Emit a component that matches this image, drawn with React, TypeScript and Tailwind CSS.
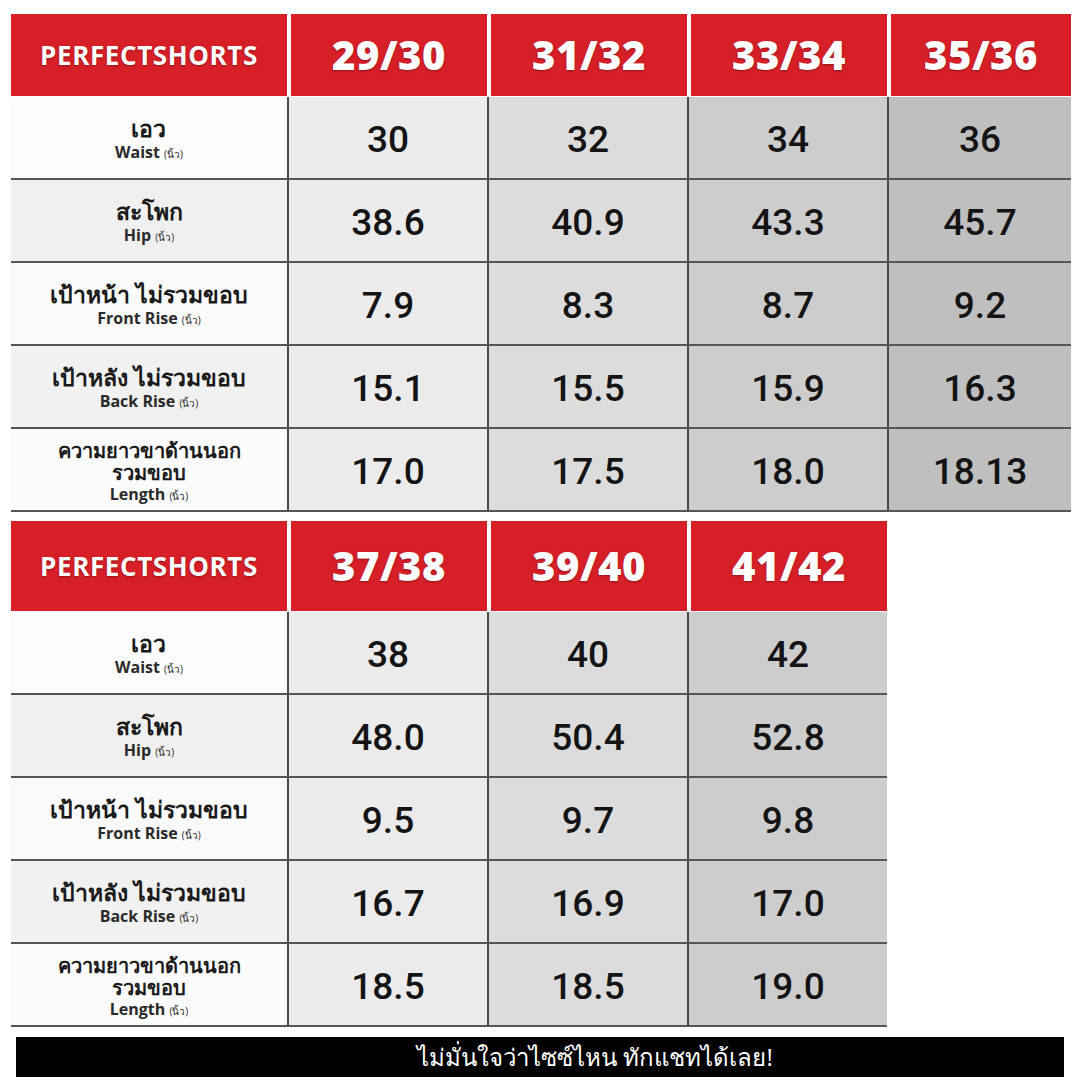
type Row = { th: string[]; en: string; values: string[] };

const cols1 = ["29/30", "31/32", "33/34", "35/36"];
const cols2 = ["37/38", "39/40", "41/42"];

const rows1: Row[] = [
  { th: ["เอว"], en: "Waist", values: ["30", "32", "34", "36"] },
  { th: ["สะโพก"], en: "Hip", values: ["38.6", "40.9", "43.3", "45.7"] },
  { th: ["เป้าหน้า ไม่รวมขอบ"], en: "Front Rise", values: ["7.9", "8.3", "8.7", "9.2"] },
  { th: ["เป้าหลัง ไม่รวมขอบ"], en: "Back Rise", values: ["15.1", "15.5", "15.9", "16.3"] },
  { th: ["ความยาวขาด้านนอก", "รวมขอบ"], en: "Length", values: ["17.0", "17.5", "18.0", "18.13"] },
];

const rows2: Row[] = [
  { th: ["เอว"], en: "Waist", values: ["38", "40", "42"] },
  { th: ["สะโพก"], en: "Hip", values: ["48.0", "50.4", "52.8"] },
  { th: ["เป้าหน้า ไม่รวมขอบ"], en: "Front Rise", values: ["9.5", "9.7", "9.8"] },
  { th: ["เป้าหลัง ไม่รวมขอบ"], en: "Back Rise", values: ["16.7", "16.9", "17.0"] },
  { th: ["ความยาวขาด้านนอก", "รวมขอบ"], en: "Length", values: ["18.5", "18.5", "19.0"] },
];

// column shades, lightest to darkest
const shades = ["bg-[#ebebeb]", "bg-[#dcdcdc]", "bg-[#cdcdcd]", "bg-[#bfbfbf]"];
const widths = ["w-[200px]", "w-[200px]", "w-[200px]", "w-[184px]"];
const labelBg = ["bg-[#fcfcfc]", "bg-[#f0f0f0]", "bg-[#fafafa]", "bg-[#f1f1f1]", "bg-[#fbfbfb]"];

function Label({ row }: { row: Row }) {
  const long = row.th.length > 1;
  return (
    <div className={`flex flex-col items-center text-[#1a1a1a] leading-none ${long ? "pt-[6px]" : "pt-[3px]"}`}>
      {row.th.map((t) => (
        <span
          key={t}
          className={long ? "text-[20px] font-semibold leading-[22px]" : "text-[23px] font-semibold leading-[28px]"}
        >
          {t}
        </span>
      ))}
      <span className="text-[16px] font-bold text-[#2a2a2a] leading-[20px]">
        {row.en} <span className="text-[10px] font-normal">(นิ้ว)</span>
      </span>
    </div>
  );
}

function Table({ cols, rows, headH }: { cols: string[]; rows: Row[]; headH: string }) {
  return (
    <div className="flex flex-col">
      <div className={`flex ${headH}`}>
        <div className="w-[276px] bg-[#d71f27] flex items-center justify-center">
          <span className="text-white text-[26px] font-bold tracking-[0.6px] [text-shadow:0_1px_2px_rgba(0,0,0,0.35)]">
            PERFECTSHORTS
          </span>
        </div>
        {cols.map((c, i) => (
          <div key={c} className={`${widths[i]} border-l-[4px] border-white bg-[#d71f27] flex items-center justify-center`}>
            <span className="text-white text-[40px] font-extrabold tracking-[0.5px] [text-shadow:0_1px_2px_rgba(0,0,0,0.35)]">
              {c}
            </span>
          </div>
        ))}
      </div>
      <div className="h-[1px] bg-white" />
      {rows.map((r, ri) => (
        <div key={r.en} className="flex h-[83px] border-b-2 border-[#555555]">
          <div className={`w-[276px] ${labelBg[ri]} flex items-center justify-center`}>
            <Label row={r} />
          </div>
          {r.values.map((v, i) => (
            <div
              key={i}
              className={`${widths[i]} ${shades[i]} border-l-2 border-[#4a4a4a] flex items-center justify-center pt-[4px]`}
            >
              <span className="font-['Roboto',sans-serif] text-[37px] font-medium text-[#141414]">{v}</span>
            </div>
          ))}
        </div>
      ))}
    </div>
  );
}

export default function App() {
  return (
    <div className="w-[1080px] h-[1080px] bg-white pt-[14px] pl-[11px] font-['Open_Sans','Noto_Sans',sans-serif] overflow-hidden">
      <div className="w-[1060px]">
        <Table cols={cols1} rows={rows1} headH="h-[82px]" />
      </div>
      <div className="w-[876px] mt-[9px]">
        <Table cols={cols2} rows={rows2} headH="h-[90px]" />
      </div>
      <div className="ml-[5px] mt-[10px] w-[1048px] h-[40px] bg-black flex items-center justify-center pl-[110px]">
        <span className="text-white text-[24px] leading-none">ไม่มั่นใจว่าไซซ์ไหน ทักแชทได้เลย!</span>
      </div>
    </div>
  );
}
